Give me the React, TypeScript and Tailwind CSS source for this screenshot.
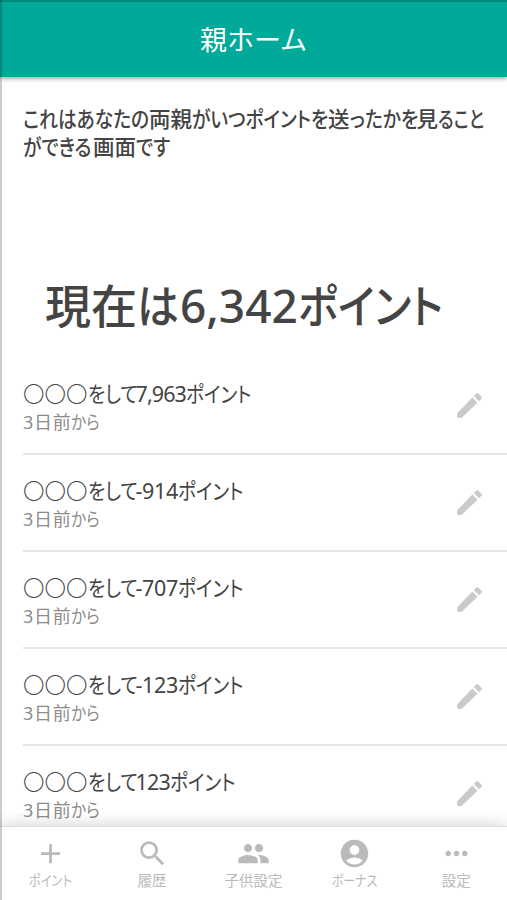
import React from 'react';
import { MdAccountCircle, MdAdd, MdMoreHoriz, MdPeople, MdSearch } from 'react-icons/md';

interface KanaProps {
    children: string;
    width: string;
    scale?: string;
}

// Condensed kana run, the outer span keeps the narrowed advance
const Kana: React.FC<KanaProps> = ({ children, width, scale = 'scale-x-[0.87]' }) => (
    <span className={`inline-block whitespace-nowrap ${width}`}>
        <span className={`inline-block origin-left ${scale}`}>{children}</span>
    </span>
);

const PencilIcon: React.FC = () => (
    <svg className="w-[33px] h-[33px] text-[#cacaca]" viewBox="0 0 24 24" fill="currentColor">
        <path d="M3 18.2V20q0 1 1 1h1.8q.6 0 1-.4L17.81 9.94l-3.75-3.75L3.4 17.2q-.4.4-.4 1zM20.71 7.04a1 1 0 0 0 0-1.41l-2.34-2.34a1 1 0 0 0-1.41 0l-1.83 1.83 3.75 3.75 1.83-1.83z" />
    </svg>
);

const rows = [
    { points: '7,963', pointsClass: 'tracking-[-0.9px]' },
    { points: '-914', pointsClass: 'tracking-[-0.35px]' },
    { points: '-707', pointsClass: 'tracking-[-0.35px]' },
    { points: '-123', pointsClass: 'tracking-[-0.35px]' },
    { points: '123', pointsClass: 'tracking-[-0.8px]' },
];

const tabs = [
    { label: 'ポイント', Icon: MdAdd, labelClass: 'scale-x-[0.85]' },
    { label: '履歴', Icon: MdSearch, labelClass: '' },
    { label: '子供設定', Icon: MdPeople, labelClass: '' },
    { label: 'ボーナス', Icon: MdAccountCircle, labelClass: 'scale-x-[0.83]' },
    { label: '設定', Icon: MdMoreHoriz, labelClass: '' },
];

const HistoryRow: React.FC<{ points: string; pointsClass: string }> = ({ points, pointsClass }) => (
    <li className="ml-[23px] h-[97px] shrink-0 flex items-center justify-between border-b-2 border-[#e6e6e6] pr-[21px]">
        <div className="pt-[5px] whitespace-nowrap">
            <p className="h-[28px] text-[21.5px] leading-[28px] text-[#444]">
                <span className="font-light">〇〇〇</span>
                <Kana width="w-[48px]">をして</Kana>
                <span className={pointsClass}>{points}</span>
                <Kana width="w-[64px]">ポイント</Kana>
            </p>
            <p className="h-[28px] text-[18px] leading-[28px] text-[#8c8c8c]">
                <span className="tracking-[0.7px]">3日前</span>
                <Kana width="w-[29px]">から</Kana>
            </p>
        </div>
        <PencilIcon />
    </li>
);

const App: React.FC = () => (
    <div className="relative w-full h-[900px] flex flex-col overflow-hidden bg-white font-['Noto_Sans','Noto_Sans_CJK_JP',sans-serif] [font-feature-settings:'palt']">
        <header className="relative z-10 h-[77px] shrink-0 flex items-center justify-center bg-[#00a99a] border-t-2 border-[#02897d] shadow-[0_1px_5px_rgba(0,0,0,0.45)]">
            <h1 className="text-[27px] leading-[36px] text-white [font-feature-settings:normal]">親ホーム</h1>
        </header>

        <main className="flex-1 min-h-0 overflow-hidden">
            <div className="pt-[28px] pl-[23px] h-[151px] text-[21.5px] leading-[28px] font-medium text-[#444] whitespace-nowrap">
                <p className="h-[28px]">
                    <Kana width="w-[126px]">これはあなたの</Kana>両親
                    <Kana width="w-[136px]">がいつポイントを</Kana>送
                    <Kana width="w-[67px]">ったかを</Kana>見
                    <Kana width="w-[46px]" scale="scale-x-[0.81]">ること</Kana>
                </p>
                <p className="h-[28px]">
                    <Kana width="w-[70px]">ができる</Kana>画面
                    <Kana width="w-[36px]">です</Kana>
                </p>
            </div>
            <h2 className="h-[130px] pt-[42px] pl-[45px] text-[46px] leading-[70px] font-medium text-[#444] whitespace-nowrap">
                現在
                <Kana width="w-[43px]" scale="scale-x-[0.91]">は</Kana>
                <span>6,342</span>
                <Kana width="w-[143px]" scale="scale-x-[0.9]">ポイント</Kana>
            </h2>
            <ul className="flex flex-col">
                {rows.map((row) => (
                    <HistoryRow key={row.points} {...row} />
                ))}
            </ul>
        </main>

        <nav className="relative z-10 h-[74px] shrink-0 grid grid-cols-5 bg-white border-t border-[#ddd] shadow-[0_-2px_14px_rgba(0,0,0,0.16)]">
            {tabs.map(({ label, Icon, labelClass }) => (
                <button key={label} className="flex flex-col items-center pt-[10px] text-[#bababa]">
                    <Icon className="w-[33px] h-[33px]" />
                    <span className={`text-[14.5px] leading-[20px] whitespace-nowrap ${labelClass}`}>{label}</span>
                </button>
            ))}
        </nav>

        <div className="absolute z-20 left-0 top-0 w-[2px] h-full bg-black/20" />
    </div>
);

export default App;
